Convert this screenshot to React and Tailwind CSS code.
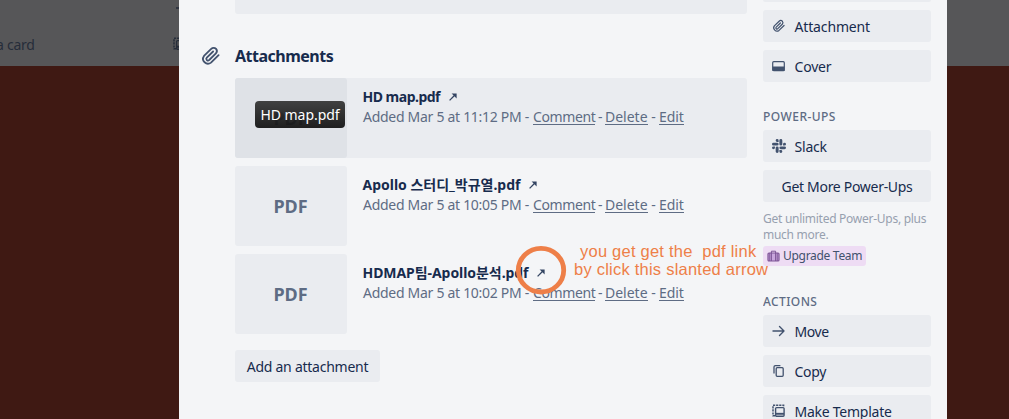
import React from "react";

function Clip({ className }) {
  return (
    <svg viewBox="0 0 24 24" className={className} fill="none" stroke="currentColor" strokeWidth="1.8" strokeLinecap="round" strokeLinejoin="round">
      <path d="M19.6 11.2 12 18.6a4.9 4.9 0 0 1-7-6.7l7.2-7a3.5 3.5 0 0 1 4.9 0M16.9 9.4l-6.7 6.6a1.65 1.65 0 0 1-2.4-2.3l6.3-6.2M16.9 4.7a3.5 3.5 0 0 1 0 4.7" />
    </svg>
  );
}

function CoverIcon() {
  return (
    <svg viewBox="0 0 16 16" className="size-4">
      <rect x="1.7" y="3.7" width="11.6" height="9" rx="1" fill="none" stroke="#42526e" strokeWidth="1.2" />
      <path d="M1.5 8.5h12V13h-12z" fill="#42526e" />
    </svg>
  );
}

function SlackIcon() {
  return (
    <svg viewBox="0 0 24 24" className="size-[14px]" fill="#42526e">
      <path d="M5.042 15.165a2.528 2.528 0 0 1-2.52 2.523A2.528 2.528 0 0 1 0 15.165a2.527 2.527 0 0 1 2.522-2.52h2.52v2.52zM6.313 15.165a2.527 2.527 0 0 1 2.521-2.52 2.527 2.527 0 0 1 2.521 2.52v6.313A2.528 2.528 0 0 1 8.834 24a2.528 2.528 0 0 1-2.521-2.522v-6.313zM8.834 5.042a2.528 2.528 0 0 1-2.521-2.52A2.528 2.528 0 0 1 8.834 0a2.528 2.528 0 0 1 2.521 2.522v2.52H8.834zM8.834 6.313a2.528 2.528 0 0 1 2.521 2.521 2.528 2.528 0 0 1-2.521 2.521H2.522A2.528 2.528 0 0 1 0 8.834a2.528 2.528 0 0 1 2.522-2.521h6.312zM18.956 8.834a2.528 2.528 0 0 1 2.522-2.521A2.528 2.528 0 0 1 24 8.834a2.528 2.528 0 0 1-2.522 2.521h-2.522V8.834zM17.688 8.834a2.528 2.528 0 0 1-2.523 2.521 2.527 2.527 0 0 1-2.52-2.521V2.522A2.527 2.527 0 0 1 15.165 0a2.528 2.528 0 0 1 2.523 2.522v6.312zM15.165 18.956a2.528 2.528 0 0 1 2.523 2.522A2.528 2.528 0 0 1 15.165 24a2.527 2.527 0 0 1-2.52-2.522v-2.522h2.52zM15.165 17.688a2.527 2.527 0 0 1-2.52-2.523 2.526 2.526 0 0 1 2.52-2.52h6.313A2.527 2.527 0 0 1 24 15.165a2.528 2.528 0 0 1-2.522 2.523h-6.313z" />
    </svg>
  );
}

function MoveIcon() {
  return (
    <svg viewBox="0 0 16 16" className="size-4" fill="none" stroke="#42526e" strokeWidth="1.4" strokeLinecap="round" strokeLinejoin="round">
      <path d="M2 8h11M8.5 3.5 13 8 8.5 12.5" />
    </svg>
  );
}

function CopyIcon() {
  return (
    <svg viewBox="0 0 16 16" className="size-4" fill="none" stroke="#42526e" strokeWidth="1.3">
      <path d="M3 10.5V4a1.4 1.4 0 0 1 1.4-1.4h5" />
      <rect x="5.2" y="4.7" width="7" height="8.6" rx="1" />
    </svg>
  );
}

function TemplateIcon({ className = "size-4" }) {
  return (
    <svg viewBox="0 0 16 16" className={className} fill="none" stroke="currentColor">
      <path d="M4 12.7H2V2.3h10.6v1.5" strokeWidth="1.5" strokeDasharray="2.2 0.9" />
      <rect x="4.6" y="4.6" width="8.5" height="8.6" rx="1" strokeWidth="1.4" />
      <path d="M5 10.8h8" strokeWidth="1.9" />
    </svg>
  );
}

function SlantArrow() {
  return (
    <svg viewBox="0 0 8 8" className="ml-[9px] size-2 shrink-0" fill="none" stroke="#344563">
      <path d="M.6 7.4 6.2 1.8" strokeWidth="1.3" />
      <path d="M2.6.6h5v5z" fill="#344563" stroke="none" />
    </svg>
  );
}

function SideButton({ icon, label, track }) {
  return (
    <div className="flex h-8 shrink-0 items-center rounded-[3px] bg-[#eaecf0] pl-2 text-[14px] text-[#172b4d]">
      <span className="flex w-6 shrink-0 items-center text-[#42526e]">{icon}</span>
      <span className={"-ml-[0.5px] whitespace-nowrap " + track}>{label}</span>
    </div>
  );
}

function Attachment({ name, nameTrack, time, active }) {
  return (
    <div className={"flex h-20 rounded-[3px] " + (active ? "bg-[#eaecf0]" : "")}>
      <div className={"relative flex w-28 shrink-0 items-center justify-center rounded-[3px] text-[18px] font-bold text-[#5e6c84] " + (active ? "bg-[#dfe2e7]" : "bg-[#eaecf0]")}>
        <span className="-ml-[1px] tracking-[-0.1px]">PDF</span>
        {active && (
          <div className="absolute left-5 top-[23px] flex h-[27px] w-[90px] items-center justify-center rounded-[4px] bg-[linear-gradient(#353535ee,#111111ee)] text-[14px] font-normal text-white">
            <span className="whitespace-nowrap tracking-[-0.05px]">HD map.pdf</span>
          </div>
        )}
      </div>
      <div className="ml-4 mt-[9px] whitespace-nowrap text-[14px] leading-5">
        <div className="-ml-[0.5px] flex items-center font-bold text-[#172b4d]">
          <span className={nameTrack}>{name}</span>
          <SlantArrow />
        </div>
        <div className="flex text-[#5e6c84]">
          <span className="w-[170px] tracking-[-0.29px]">Added Mar 5 at {time} PM -</span>
          <Link w="w-[62px]" t="tracking-[-0.4px]">Comment</Link>
          <span className="w-[10px] pl-[3px]">-</span>
          <Link w="w-[43px]" t="tracking-[0px]">Delete</Link>
          <span className="w-[11px] text-center">-</span>
          <Link w="w-[25px]" t="tracking-[-0.1px]">Edit</Link>
        </div>
      </div>
    </div>
  );
}

function Link({ w, t, children }) {
  return <span className={"h-[18px] border-b border-[#5e6c84] " + w + " " + t}>{children}</span>;
}

export default function App() {
  return (
    <div className="relative flex h-[419px] w-[1009px] overflow-hidden bg-[#3f1913] font-['Noto_Sans','Noto_Sans_CJK_KR',sans-serif]">
      <div className="flex h-[66px] w-[179px] shrink-0 justify-between overflow-hidden bg-[#565658] text-[14px] text-[#262d3a]">
        <span className="-ml-[4px] mt-[35px] leading-5 tracking-[-0.25px]">a card</span>
        <div className="flex w-[6px] flex-col overflow-hidden">
          <span className="ml-[3px] mt-[7px] h-[2px] w-[3px] bg-[#303541]" />
          <TemplateIcon className="mt-[27px] size-4 shrink-0 -translate-x-[1px]" />
        </div>
      </div>

      <div className="flex w-[768px] shrink-0 bg-[#f4f5f7]">
        <main className="ml-14 flex w-[512px] shrink-0 flex-col">
          <div className="h-[14px] shrink-0 rounded-b-[3px] bg-[#eaecf0]" />
          <div className="-ml-9 mt-[30px] flex h-6 items-center text-[#42526e]">
            <Clip className="mr-3 size-6" />
            <h3 className="text-[16px] font-bold leading-6 tracking-[-0.5px] text-[#172b4d]">Attachments</h3>
          </div>
          <div className="mt-[10px] flex flex-col gap-2">
            <Attachment name="HD map.pdf" nameTrack="tracking-[-0.5px]" time="11:12" active />
            <Attachment name="Apollo 스터디_박규열.pdf" nameTrack="tracking-[-0.01px]" time="10:05" />
            <Attachment name="HDMAP팀-Apollo분석.pdf" nameTrack="tracking-[-0.06px]" time="10:02" />
          </div>
          <div className="mt-4 flex h-8 w-[145px] items-center justify-center whitespace-nowrap rounded-[3px] bg-[#eaecf0] text-[14px] tracking-[-0.25px] text-[#172b4d]">
            Add an attachment
          </div>
        </main>

        <aside className="ml-4 flex h-[419px] w-[168px] shrink-0 flex-col overflow-hidden">
          <div className="h-[2px] shrink-0 rounded-b-[3px] bg-[#eaecf0]" />
          <div className="mt-2 flex flex-col gap-2">
            <SideButton icon={<Clip className="size-4" />} label="Attachment" track="tracking-[-0.15px]" />
            <SideButton icon={<CoverIcon />} label="Cover" track="tracking-[-0.2px]" />
          </div>
          <h4 className="mt-[25px] h-5 shrink-0 whitespace-nowrap text-[12px] font-medium leading-5 tracking-[0.45px] text-[#5e6c84]">POWER-UPS</h4>
          <div className="mt-[3px] flex flex-col gap-2">
            <SideButton icon={<span className="ml-[1px]"><SlackIcon /></span>} label="Slack" track="tracking-[-0.2px]" />
            <div className="flex h-8 items-center justify-center whitespace-nowrap rounded-[3px] bg-[#eaecf0] text-[14px] tracking-[-0.3px] text-[#172b4d]">Get More Power-Ups</div>
          </div>
          <div className="mt-[9px] whitespace-nowrap text-[12px] leading-4 tracking-[-0.27px] text-[#97a0af]">
            <p>Get unlimited Power-Ups, plus</p>
            <p>much more.</p>
          </div>
          <div className="mt-[3px] flex h-5 w-[103px] shrink-0 items-center whitespace-nowrap rounded-[3px] bg-[#eedcf4] pl-1 text-[12px] tracking-[-0.3px] text-[#42526e]">
            <svg viewBox="0 0 13 12" className="mr-[3px] h-3 w-[13px] shrink-0" fill="#c9a6dd" stroke="#7d5596" strokeWidth="1.2">
              <rect x="1" y="3" width="11" height="8" rx="1" />
              <path d="M4.4 11V1.2h4.2V11M2.8 3v8M10.2 3v8" fill="none" strokeWidth="1" />
            </svg>
            Upgrade Team
          </div>
          <h4 className="mt-[26px] h-5 shrink-0 text-[12px] font-medium leading-5 tracking-[0.4px] text-[#5e6c84]">ACTIONS</h4>
          <div className="mt-[3px] flex flex-col gap-2">
            <SideButton icon={<MoveIcon />} label="Move" track="tracking-[-0.4px]" />
            <SideButton icon={<CopyIcon />} label="Copy" track="tracking-[-0.3px]" />
            <SideButton icon={<TemplateIcon />} label="Make Template" track="tracking-[-0.25px]" />
          </div>
        </aside>
      </div>
      <div className="h-[66px] flex-1 bg-[#565658]" />

      <svg viewBox="0 0 52 50" className="absolute left-[515px] top-[245px] h-[50px] w-[52px]" fill="none" stroke="#ee7f48" strokeWidth="4.8">
        <ellipse cx="26" cy="25.2" rx="22.7" ry="21.8" />
      </svg>
      <div className="absolute left-[574px] top-[242px] whitespace-pre font-['Liberation_Sans',sans-serif] text-[16.5px] leading-[18px] tracking-[0.23px] text-[#ee7f48]">
        <div className="ml-[6px]">you get get the  pdf link</div>
        <div>by click this slanted arrow</div>
      </div>
    </div>
  );
}
